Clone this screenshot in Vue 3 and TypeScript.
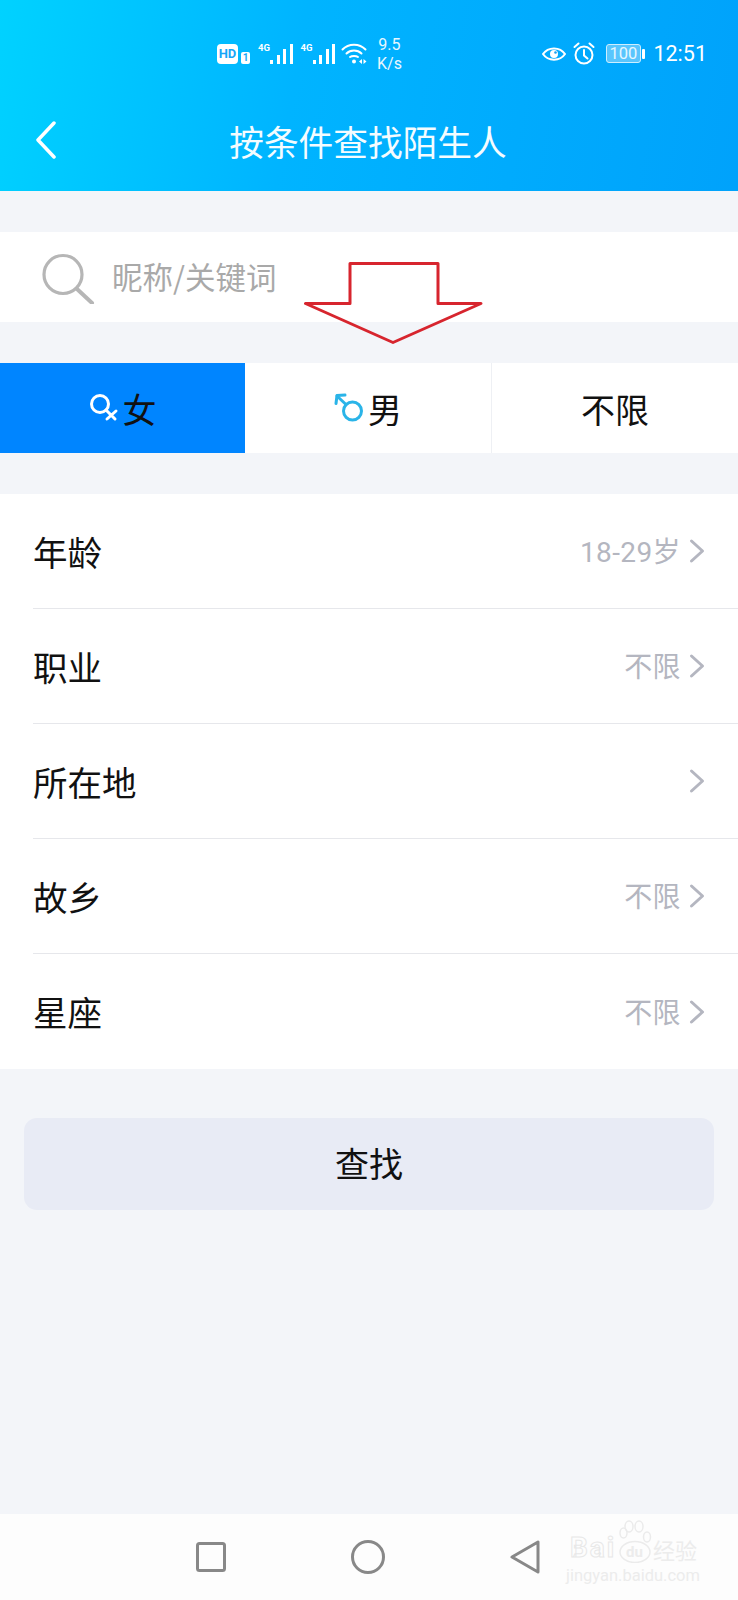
<script setup lang="ts">
const rows = [
  { label: '年龄', value: '18-29岁' },
  { label: '职业', value: '不限' },
  { label: '所在地', value: '' },
  { label: '故乡', value: '不限' },
  { label: '星座', value: '不限' },
]
const bars = [4, 9, 15, 20]
</script>

<template>
  <div class="page">
    <header class="header">
      <div class="status">
        <div class="status-left">
          <span class="hd">HD</span>
          <span class="sim">1</span>
          <div v-for="n in 2" :key="n" class="signal">
            <span class="four-g">4G</span>
            <span class="bars"><i v-for="b in bars" :key="b" :style="{ height: b + 'px' }"></i></span>
          </div>
          <svg class="wifi" width="26" height="21" viewBox="0 0 26 21" fill="none" stroke="#fff" stroke-width="2" stroke-linecap="round">
            <path d="M1.5 6.5C7.5 0 18.5 0 24.5 6.5" />
            <path d="M5.5 10.5C9.5 6.5 16.5 6.5 20.5 10.5" />
            <path d="M9 14C11 12.5 15 12.5 17 14" />
            <circle cx="13" cy="18.5" r="2" fill="#fff" stroke="none" />
            <path d="M18 18.5l3-2.500v5zM25.500 18.500l-3-2.500v5z" fill="#fff" stroke="none" />
          </svg>
          <div class="speed"><span>9.5</span><span>K/s</span></div>
        </div>
        <div class="status-right">
          <svg width="24" height="18" viewBox="0 0 24 18" fill="none" stroke="#fff" stroke-width="2">
            <path d="M1 9C6 1.5 18 1.5 23 9C18 16.5 6 16.5 1 9Z" />
            <circle cx="12" cy="9" r="4" fill="#fff" stroke="none" />
            <circle cx="13.5" cy="7.5" r="1.3" fill="#1aa0f0" stroke="none" />
          </svg>
          <svg class="alarm" width="22" height="23" viewBox="0 0 22 23" fill="none" stroke="#fff" stroke-width="2" stroke-linecap="round">
            <circle cx="11" cy="13" r="8.5" />
            <path d="M11 8v5.5l3.5 3" />
            <path d="M1.5 5L5.5 1.5M20.5 5L16.5 1.5" />
          </svg>
          <div class="battery"><span class="battery-box">100</span><span class="battery-tip"></span></div>
          <span class="time">12:51</span>
        </div>
      </div>
      <div class="titlebar">
        <svg class="back" width="22" height="38" viewBox="0 0 22 38" fill="none" stroke="#fff" stroke-width="3.5" stroke-linecap="round" stroke-linejoin="round">
          <path d="M19 2L3 19L19 36" />
        </svg>
        <span class="title">按条件查找陌生人</span>
      </div>
    </header>

    <div class="search">
      <svg width="54" height="54" viewBox="0 0 54 54" fill="none" stroke="#b6b6b6" stroke-width="3.2" stroke-linecap="round">
        <circle cx="21" cy="24.5" r="19" />
        <path d="M35 39L50 53" stroke-width="4" />
      </svg>
      <span class="placeholder">昵称/关键词</span>
    </div>

    <div class="tabs">
      <div class="tab active">
        <svg width="30" height="30" viewBox="0 0 30 30" fill="none" stroke="#fff" stroke-width="3" stroke-linecap="round">
          <circle cx="11" cy="11" r="8.5" />
          <path d="M17 17L26 26M27 18L18 26" />
        </svg>
        <span>女</span>
      </div>
      <div class="tab">
        <svg width="30" height="30" viewBox="0 0 30 30" fill="none" stroke="#2ab4e8" stroke-width="3" stroke-linecap="round" stroke-linejoin="round">
          <circle cx="18.5" cy="18" r="9" />
          <path d="M12 11.5L3 3" />
          <path d="M2 10.5L3 2.5L11 2" />
        </svg>
        <span>男</span>
      </div>
      <div class="tab plain"><span>不限</span></div>
    </div>

    <ul class="list">
      <li v-for="row in rows" :key="row.label" class="row">
        <span class="label">{{ row.label }}</span>
        <span class="value">{{ row.value }}</span>
        <svg class="chev" width="16" height="26" viewBox="0 0 16 26" fill="none" stroke="#b4b6c0" stroke-width="3" stroke-linecap="round" stroke-linejoin="round">
          <path d="M2.5 3L13.5 13L2.5 23" />
        </svg>
      </li>
    </ul>

    <div class="action"><button class="find">查找</button></div>

    <footer class="nav">
      <svg width="30" height="30" viewBox="0 0 30 30" fill="none" stroke="#888" stroke-width="3">
        <rect x="1.5" y="1.5" width="27" height="27" rx="2" />
      </svg>
      <svg width="34" height="34" viewBox="0 0 34 34" fill="none" stroke="#888" stroke-width="3">
        <ellipse cx="17" cy="17" rx="15.5" ry="15.5" />
      </svg>
      <svg width="30" height="34" viewBox="0 0 30 34" fill="none" stroke="#888" stroke-width="3" stroke-linejoin="round">
        <path d="M28 2V32L2 17Z" />
      </svg>
    </footer>

    <svg class="arrow" width="180" height="82" viewBox="0 0 180 82" fill="none" stroke="#d7252e" stroke-width="3" stroke-linejoin="round">
      <path d="M46 1.5H134V41.5H177L89 80.5L1.5 41.5H46Z" />
    </svg>

    <div class="watermark">
      <div class="wm-top">
        <span class="wm-bai">Bai</span>
        <span class="wm-paw">
          <svg width="36" height="43" viewBox="0 0 36 43" fill="none" stroke="#ebebeb" stroke-width="1.5">
            <ellipse cx="6.5" cy="13" rx="3.5" ry="5" />
            <ellipse cx="12" cy="6.5" rx="4" ry="5.5" />
            <ellipse cx="22" cy="6.5" rx="4" ry="5.5" />
            <ellipse cx="30" cy="17" rx="3.5" ry="5" />
            <ellipse cx="18" cy="32" rx="15" ry="10.5" />
          </svg>
          <span class="wm-du">du</span>
        </span>
        <span class="wm-cn">经验</span>
      </div>
      <div class="wm-url">jingyan.baidu.com</div>
    </div>
  </div>
</template>

<style scoped>
.page {
  position: relative;
  width: 738px;
  height: 1600px;
  display: flex;
  flex-direction: column;
  background: #f3f5f9;
  font-family: "Noto Sans CJK SC", "Noto Sans", sans-serif;
  color: #111;
  overflow: hidden;
}
.header {
  height: 191px;
  background: linear-gradient(100deg, #00d2ff 0%, #00b4ff 40%, #00a2fb 100%);
  color: #fff;
  display: flex;
  flex-direction: column;
}
.status {
  height: 107px;
  display: flex;
  align-items: center;
  justify-content: space-between;
  padding: 0 31px 0 217px;
}
.status-left,
.status-right {
  display: flex;
  align-items: center;
}
.hd {
  width: 21px;
  height: 20px;
  border-radius: 4px;
  background: #fff;
  color: #16a6f8;
  font: 700 13px/20px Roboto, sans-serif;
  text-align: center;
}
.sim {
  width: 9px;
  height: 12px;
  margin: 8px 0 0 3px;
  border-radius: 2px;
  background: #fff;
  color: #16a6f8;
  font: 700 10px/12px Roboto, sans-serif;
  text-align: center;
}
.signal {
  display: flex;
  align-items: flex-end;
  margin-left: 8px;
  height: 21px;
}
.four-g {
  font: 700 9.5px/10px Roboto, sans-serif;
  align-self: flex-start;
  width: 12px;
}
.bars {
  display: flex;
  align-items: flex-end;
  gap: 3.5px;
}
.bars i {
  width: 3px;
  background: #fff;
}
.wifi {
  margin-left: 6px;
}
.speed {
  display: flex;
  flex-direction: column;
  align-items: center;
  margin-left: 10px;
  font: 400 16px/19px Roboto, sans-serif;
  color: #e8f7ff;
}
.status-right {
  gap: 6px;
}
.alarm {
  margin-left: 1px;
}
.battery {
  display: flex;
  align-items: center;
  margin-left: 5px;
}
.battery-box {
  width: 33px;
  height: 17px;
  border: 1px solid #cdeeff;
  border-radius: 3px;
  background: rgba(255, 255, 255, 0.35);
  font: 400 16.5px/17px Roboto, sans-serif;
  text-align: center;
  color: #e6f7ff;
}
.battery-tip {
  width: 3px;
  height: 10px;
  margin-left: 1.5px;
  border-radius: 1px;
  background: #fff;
}
.time {
  margin-left: 2px;
  font: 400 21.5px/26px Roboto, sans-serif;
}
.titlebar {
  position: relative;
  display: flex;
  justify-content: center;
  height: 68px;
  padding-right: 2px;
}
.back {
  position: absolute;
  left: 35px;
  top: 14px;
}
.title {
  font-size: 34.7px;
  line-height: 48px;
  margin-top: 10px;
  color: #f4fcff;
}
.search {
  height: 90px;
  margin-top: 41px;
  padding-left: 42px;
  display: flex;
  align-items: center;
  background: #fff;
}
.placeholder {
  margin: 0 0 3px 16px;
  font-size: 30.5px;
  color: #a9a9a9;
}
.tabs {
  height: 90px;
  margin-top: 41px;
  display: flex;
  background: #fff;
}
.tab {
  width: 246px;
  display: flex;
  align-items: center;
  justify-content: center;
  gap: 4px;
  font-size: 34px;
}
.tab.active {
  width: 245px;
  background: #0085ff;
}
.tab.plain {
  border-left: 1px solid #eef0f4;
}
.list {
  list-style: none;
  margin: 41px 0 0;
  padding: 0 0 0 33px;
  background: #fff;
}
.row {
  height: 115px;
  display: flex;
  align-items: center;
  padding-right: 33px;
  border-bottom: 1px solid #e6e7eb;
  box-sizing: border-box;
}
.row:last-child {
  border-bottom: 0;
}
.label {
  flex: 1;
  margin-bottom: 1px;
  font-size: 34.5px;
}
.value {
  margin: 0 8px 2px 0;
  font-family: Roboto, "Noto Sans CJK SC", sans-serif;
  font-size: 28px;
  letter-spacing: 0.4px;
  color: #b4b6c0;
}
.action {
  padding: 49px 24px 0;
}
.find {
  display: block;
  width: 100%;
  height: 92px;
  padding: 0 0 3px;
  border: 0;
  border-radius: 13px;
  background: #e8ebf5;
  font-family: inherit;
  font-size: 34px;
  color: #111;
}
.nav {
  margin-top: auto;
  height: 86px;
  display: flex;
  align-items: center;
  padding: 0 198px 0 196px;
  justify-content: space-between;
  background: #fdfdfd;
}
.arrow {
  position: absolute;
  left: 304px;
  top: 262px;
}
.watermark {
  position: absolute;
  left: 566px;
  top: 1520px;
  width: 134px;
  color: #ececec;
  font-family: Roboto, sans-serif;
}
.wm-top {
  display: flex;
  align-items: flex-end;
  height: 43px;
}
.wm-bai {
  width: 47px;
  margin-left: 4px;
  font-size: 28px;
  line-height: 30px;
  font-weight: 700;
  letter-spacing: 2px;
  color: #fdfdfd;
  -webkit-text-stroke: 1px #e8e8e8;
}
.wm-paw {
  position: relative;
  width: 36px;
  height: 43px;
}
.wm-paw svg {
  position: absolute;
  left: 0;
  top: 0;
}
.wm-du {
  position: absolute;
  left: 9px;
  top: 23px;
  font-size: 15px;
  line-height: 18px;
  font-weight: 700;
}
.wm-cn {
  margin-bottom: 1px;
  font-family: "Noto Sans CJK SC", sans-serif;
  font-size: 22px;
  line-height: 26px;
  white-space: nowrap;
}
.wm-url {
  margin-top: 4px;
  font-size: 16.5px;
  line-height: 17px;
  white-space: nowrap;
}
</style>
